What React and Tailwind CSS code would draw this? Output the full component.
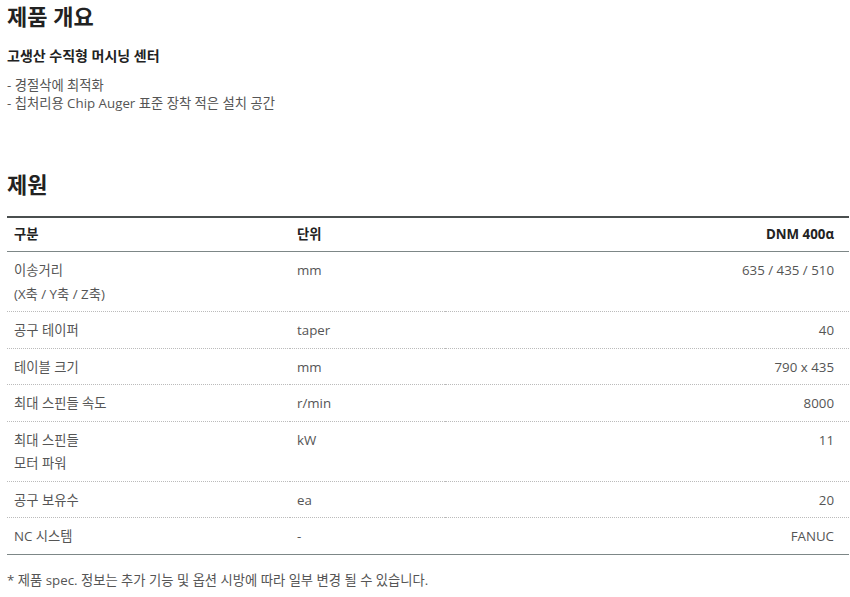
const rows = [
  { name: ["이송거리", "(X축 / Y축 / Z축)"], unit: "mm", value: "635 / 435 / 510" },
  { name: ["공구 테이퍼"], unit: "taper", value: "40" },
  { name: ["테이블 크기"], unit: "mm", value: "790 x 435" },
  { name: ["최대 스핀들 속도"], unit: "r/min", value: "8000" },
  { name: ["최대 스핀들", "모터 파워"], unit: "kW", value: "11" },
  { name: ["공구 보유수"], unit: "ea", value: "20" },
  { name: ["NC 시스템"], unit: "-", value: "FANUC" },
];

export default function App() {
  return (
    <div className="bg-white w-[850px] h-[597px] overflow-hidden text-[#555] font-['Open_Sans','Noto_Sans_CJK_KR',sans-serif]">
      <div className="pl-[7px] pr-px">
        <h2 className="text-[22px] leading-[30px] font-bold text-[#222] pt-px">제품 개요</h2>
        <h3 className="text-[14px] leading-[20px] font-bold text-[#222] mt-[15px]">고생산 수직형 머시닝 센터</h3>
        <ul className="mt-[10px] text-[13.3px] leading-[18px] text-[#555]">
          <li>- 경절삭에 최적화</li>
          <li>- 칩처리용 Chip Auger 표준 장착 적은 설치 공간</li>
        </ul>

        <h2 className="text-[22px] leading-[30px] font-bold text-[#222] mt-[57px]">제원</h2>

        <table className="w-full mt-[17px] border-t-2 border-[#4a4f4f] text-[13.3px] border-collapse">
          <thead>
            <tr className="border-b border-[#7d8787]">
              <th className="w-[283px] text-left font-bold text-[#222] pl-[7px] py-[7px] leading-[19px]">구분</th>
              <th className="text-left font-bold text-[#222] pl-[7px] py-[7px] leading-[19px]">단위</th>
              <th className="text-right font-bold text-[#222] pr-[15px] py-[7px] leading-[19px]">DNM 400α</th>
            </tr>
          </thead>
          <tbody>
            {rows.map((r, i) => (
              <tr
                key={i}
                className={i === rows.length - 1 ? "border-b border-[#7d8787]" : "border-b border-dotted border-[#bbb]"}
              >
                <td className="align-top pl-[7px] pt-[7px] pb-[5px] leading-[23.5px] text-[#555]">
                  {r.name.map((n, j) => (
                    <div key={j}>{n}</div>
                  ))}
                </td>
                <td className="align-top pl-[7px] pt-[7px] pb-[5px] leading-[23.5px] text-[#555]">{r.unit}</td>
                <td className="align-top text-right pr-[15px] pt-[7px] pb-[5px] leading-[23.5px] text-[#555]">{r.value}</td>
              </tr>
            ))}
          </tbody>
        </table>

        <p className="mt-[16px] text-[13.3px] leading-[18px] text-[#555]">* 제품 spec. 정보는 추가 기능 및 옵션 시방에 따라 일부 변경 될 수 있습니다.</p>
      </div>
    </div>
  );
}
